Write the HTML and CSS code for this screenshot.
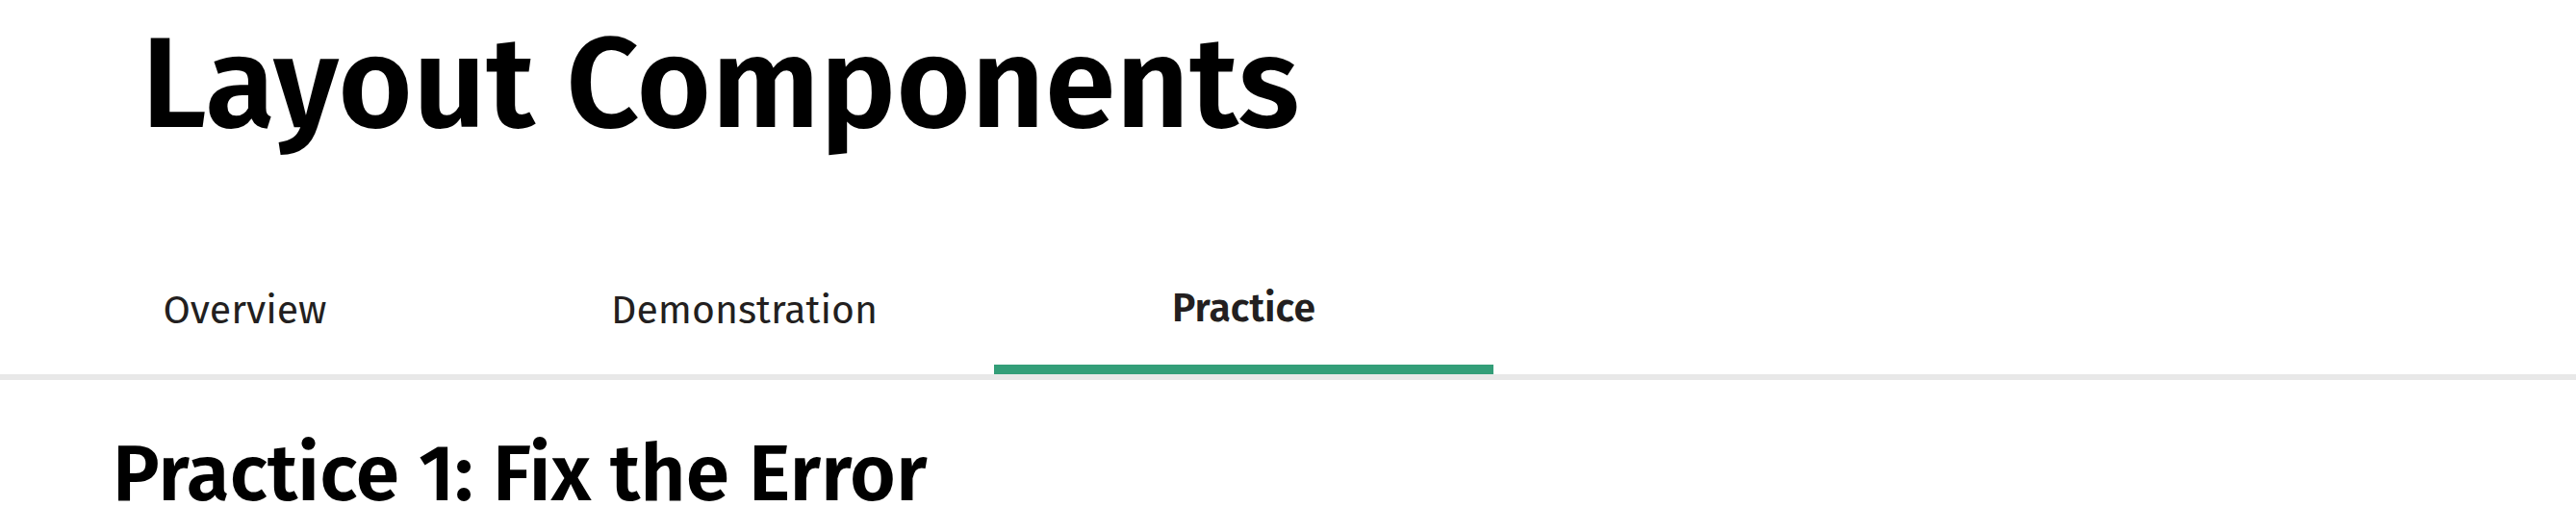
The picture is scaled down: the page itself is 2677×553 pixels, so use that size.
FILE: index.html
```html
<!DOCTYPE html>
<html lang="en">
<head>
<meta charset="utf-8">
<title>Layout Components</title>
<link rel="stylesheet" href="styles.css">
</head>
<body>
<header class="page-header"><h1 class="page-title">Layout Components</h1></header>
<nav class="tabs" role="tablist" aria-label="Layout Components">
<button class="tab" role="tab" type="button" aria-selected="false">Overview</button>
<button class="tab" role="tab" type="button" aria-selected="false">Demonstration</button>
<button class="tab tab-active" role="tab" type="button" aria-selected="true">Practice</button>
</nav>
<main class="content"><h2 class="section-title">Practice 1: Fix the Error</h2></main>
</body>
</html>
```
FILE: styles.css
```css
body {
  margin: 0;
  background: #fff;
  color: #000;
  font-family: "Fira Sans", "Noto Sans", sans-serif;
}
.page-header {
  padding: 16px 147px 0;
}
.page-title {
  margin: 0;
  font-size: 133px;
  line-height: 144px;
  font-weight: 600;
}
.tabs {
  display: flex;
  margin: 103px 0 0 -5px;
  border-bottom: 6px solid #e8e8e8;
}
.tab {
  box-sizing: border-box;
  height: 126px;
  min-width: 519px;
  padding: 0;
  border: 0;
  border-bottom: 6px solid transparent;
  background: none;
  color: #231f20;
  font: 400 41px/48px "Fira Sans", "Noto Sans", sans-serif;
}
.tab-active {
  border-bottom: 10px solid #339e78;
  font-weight: 600;
}
.content {
  padding: 50px 117px 0;
}
.section-title {
  margin: 0;
  font-size: 82px;
  line-height: 96px;
  font-weight: 600;
}
```
